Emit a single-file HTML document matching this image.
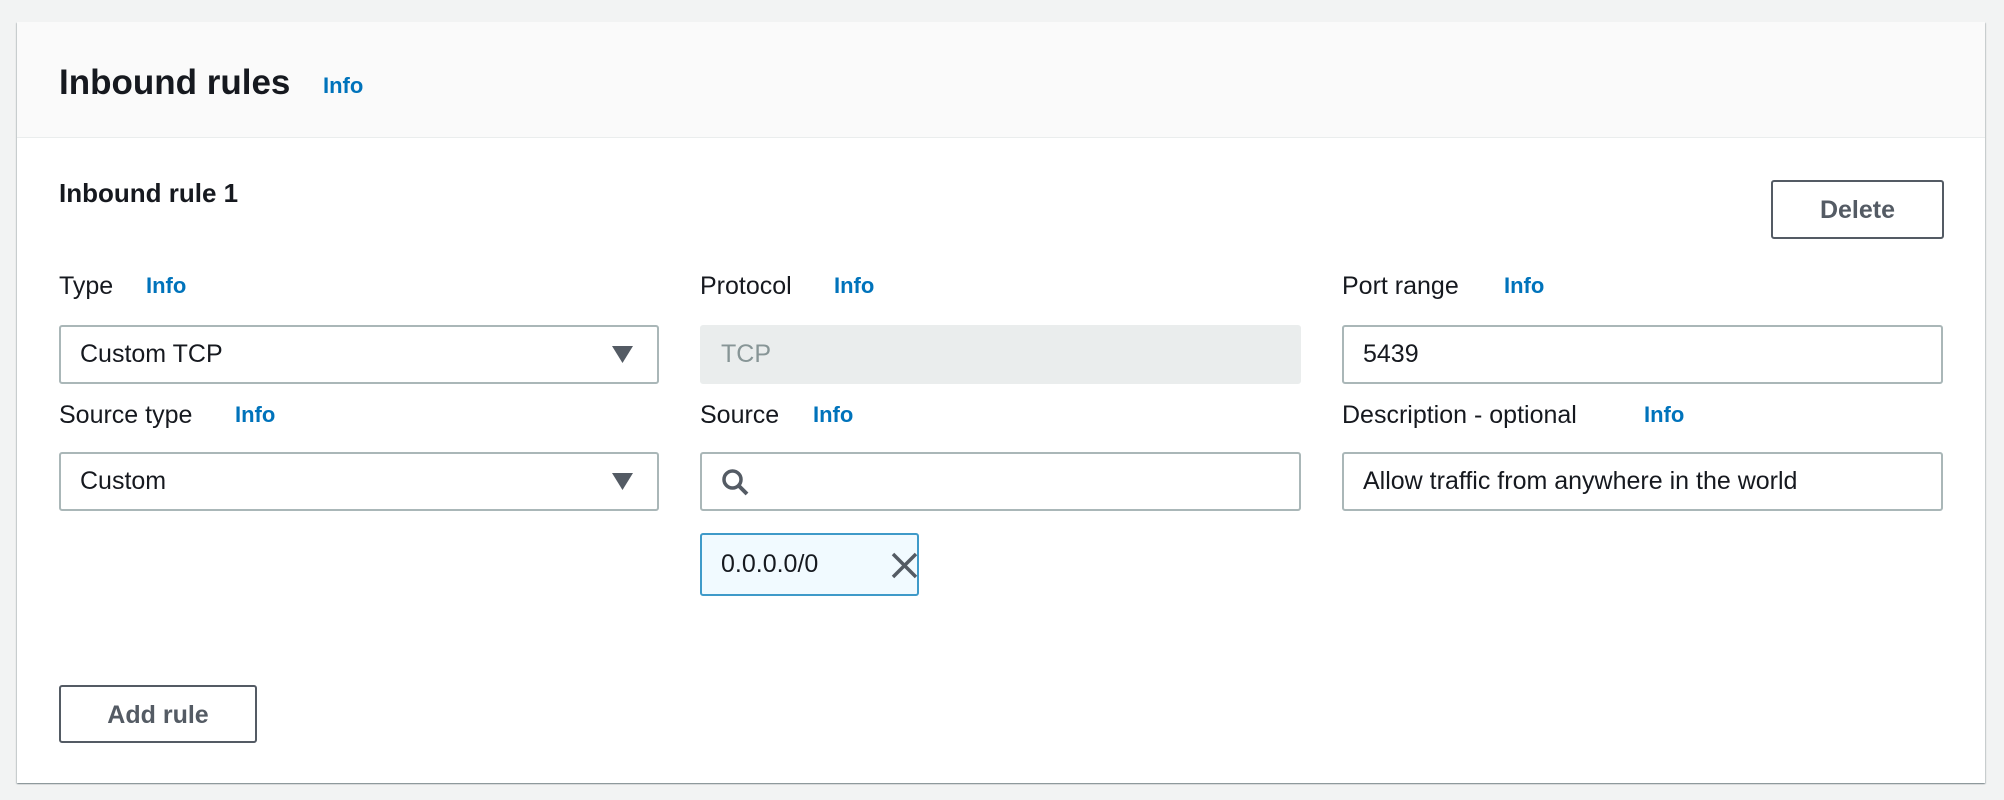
<!DOCTYPE html>
<html><head><meta charset="utf-8"><style>
*{box-sizing:border-box;margin:0;padding:0}
body{width:2004px;height:800px;background:#f2f3f3;font-family:"Liberation Sans",sans-serif;color:#16191f;position:relative;overflow:hidden}
.panel{position:absolute;left:17px;top:22px;width:1968px;height:761px;background:#fff;box-shadow:0 1px 1px 0 rgba(0,28,36,.3),1px 1px 1px 0 rgba(0,28,36,.15),-1px 1px 1px 0 rgba(0,28,36,.15)}
.hdr{position:absolute;left:0;top:0;width:100%;height:116px;background:#fafafa;border-bottom:1px solid #eaeded}
.abs{position:absolute;white-space:nowrap}
.info{color:#0073bb;font-weight:bold;font-size:22px}
.lbl{font-size:25px}
.box{position:absolute;border:2px solid #aab7b8;border-radius:3px;background:#fff;font-size:25px;padding-left:19px;display:flex;align-items:center}
.btn{position:absolute;border:2px solid #545b64;border-radius:3px;background:#fff;color:#545b64;font-weight:bold;font-size:25px;display:flex;align-items:center;justify-content:center}
</style></head><body>
<div class="panel">
 <div class="hdr"></div>
 <div class="abs" style="left:42px;top:41px;font-size:35px;font-weight:bold">Inbound rules</div>
 <div class="abs info" style="left:306px;top:51px">Info</div>
 <div class="abs" style="left:42px;top:156px;font-size:26px;font-weight:bold">Inbound rule 1</div>
 <div class="btn" style="left:1754px;top:158px;width:173px;height:59px;padding-top:2px">Delete</div>

 <div class="abs lbl" style="left:42px;top:250px">Type</div><div class="abs info" style="left:129px;top:251px">Info</div>
 <div class="abs lbl" style="left:683px;top:250px">Protocol</div><div class="abs info" style="left:817px;top:251px">Info</div>
 <div class="abs lbl" style="left:1325px;top:250px">Port range</div><div class="abs info" style="left:1487px;top:251px">Info</div>

 <div class="box" style="left:42px;top:303px;width:600px;height:59px">Custom TCP
  <svg class="abs" style="left:551px;top:19px" width="21" height="17"><path d="M0 0H21L10.5 17Z" fill="#545b64"/></svg></div>
 <div class="box" style="left:683px;top:303px;width:601px;height:59px;background:#eaeded;border-color:#eaeded;color:#879596">TCP</div>
 <div class="box" style="left:1325px;top:303px;width:601px;height:59px">5439</div>

 <div class="abs lbl" style="left:42px;top:379px">Source type</div><div class="abs info" style="left:218px;top:380px">Info</div>
 <div class="abs lbl" style="left:683px;top:379px">Source</div><div class="abs info" style="left:796px;top:380px">Info</div>
 <div class="abs lbl" style="left:1325px;top:379px">Description - optional</div><div class="abs info" style="left:1627px;top:380px">Info</div>

 <div class="box" style="left:42px;top:430px;width:600px;height:59px">Custom
  <svg class="abs" style="left:551px;top:19px" width="21" height="17"><path d="M0 0H21L10.5 17Z" fill="#545b64"/></svg></div>
 <div class="box" style="left:683px;top:430px;width:601px;height:59px">
  <svg class="abs" style="left:19px;top:14px" width="30" height="30"><circle cx="11.5" cy="11.5" r="8.5" fill="none" stroke="#545b64" stroke-width="3.5"/><path d="M17.5 17.5L26 26" stroke="#545b64" stroke-width="4"/></svg></div>
 <div class="box" style="left:1325px;top:430px;width:601px;height:59px">Allow traffic from anywhere in the world</div>

 <div class="box" style="left:683px;top:511px;width:219px;height:63px;background:#f1faff;border-color:#3f9ac9">0.0.0.0/0
  <svg class="abs" style="left:189px;top:17px" width="27" height="27"><path d="M2 2L25 25M25 2L2 25" stroke="#545b64" stroke-width="3.5"/></svg></div>

 <div class="btn" style="left:42px;top:663px;width:198px;height:58px;padding-top:2px">Add rule</div>
</div>
</body></html>
